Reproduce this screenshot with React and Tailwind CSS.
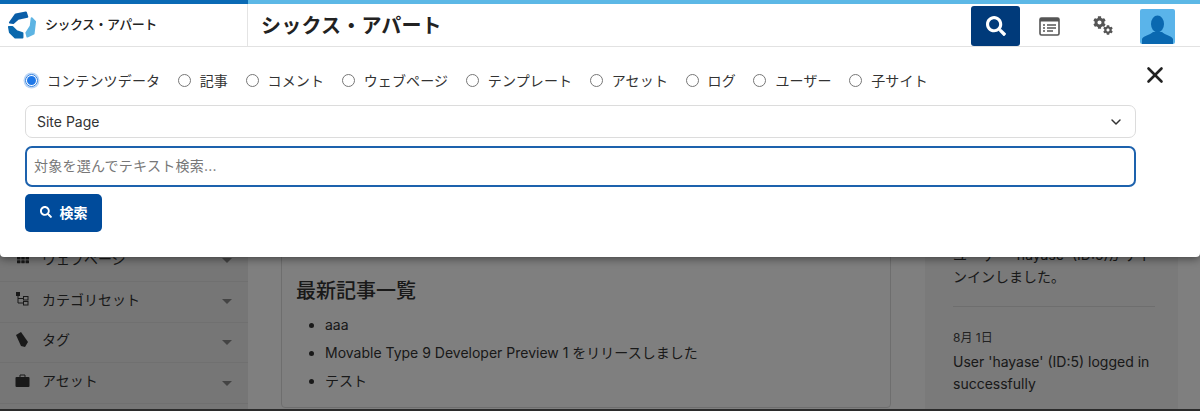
import { ChevronDown, X } from 'lucide-react';
import { FaSearch, FaCog, FaTh } from 'react-icons/fa';

const radios = ['コンテンツデータ', '記事', 'コメント', 'ウェブページ', 'テンプレート', 'アセット', 'ログ', 'ユーザー', '子サイト'];

const TreeIcon = () => (
  <svg width="13" height="14" viewBox="0 0 13 14" fill="none" stroke="#333">
    <rect x="0.5" y="0.5" width="3" height="3" fill="#333" />
    <path d="M2 3.5V11H7M2 6.5H7" strokeWidth="1" />
    <rect x="7.5" y="4.5" width="4.5" height="3.5" strokeWidth="1" />
    <rect x="7.5" y="9.5" width="4.5" height="3.5" strokeWidth="1" />
  </svg>
);

const TagIcon = () => (
  <svg width="13" height="16" viewBox="0 0 13 16" fill="#333">
    <path d="M0 3 L5 0 L12 10 L9 15 L5 14 Z" />
  </svg>
);

const CaseIcon = () => (
  <svg width="15" height="13" viewBox="0 0 15 13" fill="#333">
    <path d="M5 3V1H10V3" fill="none" stroke="#333" strokeWidth="1" />
    <rect x="0.5" y="3" width="14" height="10" rx="1" />
  </svg>
);

const GridIcon = () => <FaTh className="text-[12px] text-[#333]" />;

const sideItems = [
  { label: 'ウェブページ', icon: GridIcon },
  { label: 'カテゴリセット', icon: TreeIcon },
  { label: 'タグ', icon: TagIcon },
  { label: 'アセット', icon: CaseIcon },
];

const Logo = () => (
  <svg width="30" height="30" viewBox="0 0 31 31" strokeLinejoin="round" strokeWidth="2">
    <path d="M3 13 L9 4.5 L19.5 2.5 L21 7 L11.5 9 L6.5 13.5 Z" fill="#0a5ea8" stroke="#0a5ea8" />
    <path d="M25.5 8.5 L29 12 L27.5 24.5 L21 27.5 L20 23.5 L24.5 16.5 Z" fill="#5db4e3" stroke="#5db4e3" />
    <path d="M2 17.5 L5.5 17.5 L10 22 L16 24 L16 28.5 L8.5 28.5 L3 23 Z" fill="#0a68ad" stroke="#0a68ad" />
  </svg>
);

const WindowIcon = () => (
  <svg width="21" height="19" viewBox="0 0 21 19" fill="none">
    <rect x="1" y="1" width="19" height="17" rx="1.5" stroke="#555" strokeWidth="1.6" />
    <rect x="1" y="1" width="19" height="3.5" fill="#555" />
    <path d="M4 8h2M4 11h2M4 14h2M8 8h9M8 11h9M8 14h6" stroke="#555" strokeWidth="1.7" />
  </svg>
);

const GearsIcon = () => (
  <svg width="20" height="20" viewBox="0 0 20 20">
    <FaCog x="0" y="0" size={13} color="#555" />
    <FaCog x="10" y="9" size={10} color="#555" />
  </svg>
);

const Avatar = () => (
  <div className="flex h-[35px] w-[35px] items-end justify-center overflow-hidden rounded-[2px] bg-[#5ab4ea]">
    <svg width="31" height="29" viewBox="0 0 31 29" fill="#0a68b0">
      <ellipse cx="15.5" cy="9" rx="6.5" ry="8.5" />
      <path d="M0 29 V24 C1 21 8 20 11 17 H20 C23 20 30 21 31 24 V29 Z" />
    </svg>
  </div>
);

const Radio = ({ label, checked }) => (
  <label className="flex items-center gap-[9px]">
    {checked ? (
      <span className="flex h-[13px] w-[13px] items-center justify-center rounded-full border border-[#2f7fe0] shadow-[0_0_0_1.5px_#bcd6f5]">
        <span className="h-[9px] w-[9px] rounded-full bg-[#1f78e8]" />
      </span>
    ) : (
      <span className="h-[13px] w-[13px] rounded-full border border-[#777]" />
    )}
    <span className="text-[14px] tracking-[0.15px] text-[#333]">{label}</span>
  </label>
);

const App = () => {
  return (
    <div
      className="flex h-[411px] flex-col overflow-hidden bg-white"
      style={{ fontFamily: 'Inter, "Noto Sans CJK JP", sans-serif' }}
    >
      {/* top colour bar */}
      <div className="flex h-[4px] shrink-0">
        <div className="w-[248px] bg-[#0a6ab5]" />
        <div className="flex-1 bg-[#5cb8e6]" />
      </div>

      {/* header */}
      <header className="flex h-[43px] shrink-0 items-center border-b border-[#e2e2e2] bg-white">
        <div className="flex w-[248px] items-center border-r border-[#e4e4e4] py-[6px] pl-[7px]">
          <Logo />
          <span className="ml-[8px] text-[13px] font-medium tracking-[-0.5px] text-[#222]">シックス・アパート</span>
        </div>
        <h1 className="ml-[13px] mt-[1px] flex-1 text-[20px] font-semibold tracking-[0.2px] text-[#222]">シックス・アパート</h1>
        <div className="flex h-full items-start">
          <button className="mt-[2px] flex h-[40px] w-[49px] items-center justify-center rounded-[3px] bg-[#003a7a]">
            <FaSearch className="text-[20px] text-white" />
          </button>
          <div className="ml-[19px] mt-[13px]">
            <WindowIcon />
          </div>
          <div className="ml-[33px] mt-[12px]">
            <GearsIcon />
          </div>
          <div className="ml-[27px] mr-[25px] mt-[5px]">
            <Avatar />
          </div>
        </div>
      </header>

      <div className="relative flex flex-1 overflow-hidden border-b-2 border-[#2b2b2b] bg-white">
        {/* page behind the dialog */}
        <aside className="w-[248px] shrink-0 bg-[#ececec] pt-[194px]">
          {sideItems.map(({ label, icon: Icon }) => (
            <div key={label} className="flex h-[40.8px] items-center border-b border-[#e0e0e0] pl-[15px] pr-[16px]">
              <span className="mb-[5px] flex w-[15px] justify-center">
                <Icon />
              </span>
              <span className="mb-[5px] ml-[12px] flex-1 text-[14px] text-[#333]">{label}</span>
              <span className="h-0 w-0 border-x-[5px] border-t-[5px] border-x-transparent border-t-[#888]" />
            </div>
          ))}
        </aside>
        <main className="flex flex-1 items-end pb-[1px] pl-[33px] pr-[34px]">
          <section className="h-[168px] w-full rounded-[4px] border border-[#ddd] px-[14px] pt-[36px] text-[#333]">
            <h2 className="text-[20px] font-medium leading-[28px]">最新記事一覧</h2>
            <ul className="mt-[6px] list-disc pl-[29px] text-[14px] leading-[28px]">
              <li>aaa</li>
              <li>Movable Type 9 Developer Preview 1 をリリースしました</li>
              <li>テスト</li>
            </ul>
          </section>
        </main>
        <aside className="mr-[22px] w-[253px] shrink-0 bg-[#f4f4f4] pl-[28px] pr-[23px] pt-[197px]">
          <p className="text-[14px] leading-[22px] text-[#333]">
            ユーザー 'hayase' (ID:5)がサインインしました。
          </p>
          <hr className="mt-[18px] border-[#ddd]" />
          <p className="mt-[22px] text-[12px] leading-[18px] text-[#444]">8月 1日</p>
          <p className="mt-[4px] text-[14px] leading-[22px] text-[#333]">User 'hayase' (ID:5) logged in successfully</p>
        </aside>

        <div className="absolute inset-0 bg-black/50" />

        {/* search dialog */}
        <div className="absolute inset-x-0 top-0 h-[210px] rounded-b-[4px] bg-white pl-[25px] pr-[64px] pt-[26px] shadow-[0_2px_8px_rgba(0,0,0,0.45)]">
          <div className="flex h-[14px] items-center gap-[17.5px]">
            {radios.map((label, i) => (
              <Radio key={label} label={label} checked={i === 0} />
            ))}
          </div>
          <button className="absolute right-[32px] top-[15px] text-[#222]">
            <X size={26} strokeWidth={2.4} />
          </button>
          <div className="mt-[18px] flex h-[33px] items-center justify-between rounded-[7px] border-[1.5px] border-[#dcdcdc] pl-[11px] pr-[11px] text-[14px] text-[#333]">
            Site Page
            <ChevronDown size={16} strokeWidth={2.2} />
          </div>
          <input
            className="mt-[8px] block h-[41px] w-full rounded-[7px] border-2 border-[#1d62ad] px-[7px] pb-[3px] text-[14px] tracking-[0.25px] outline-none placeholder:text-[#777]"
            placeholder="対象を選んでテキスト検索..."
          />
          <button className="mt-[7px] flex h-[38px] w-[77px] items-center justify-center gap-[8px] rounded-[5px] bg-[#004b9b] pb-[2px] text-[14px] font-bold text-white">
            <FaSearch className="text-[12px]" />
            検索
          </button>
        </div>
      </div>
    </div>
  );
};

export default App;
